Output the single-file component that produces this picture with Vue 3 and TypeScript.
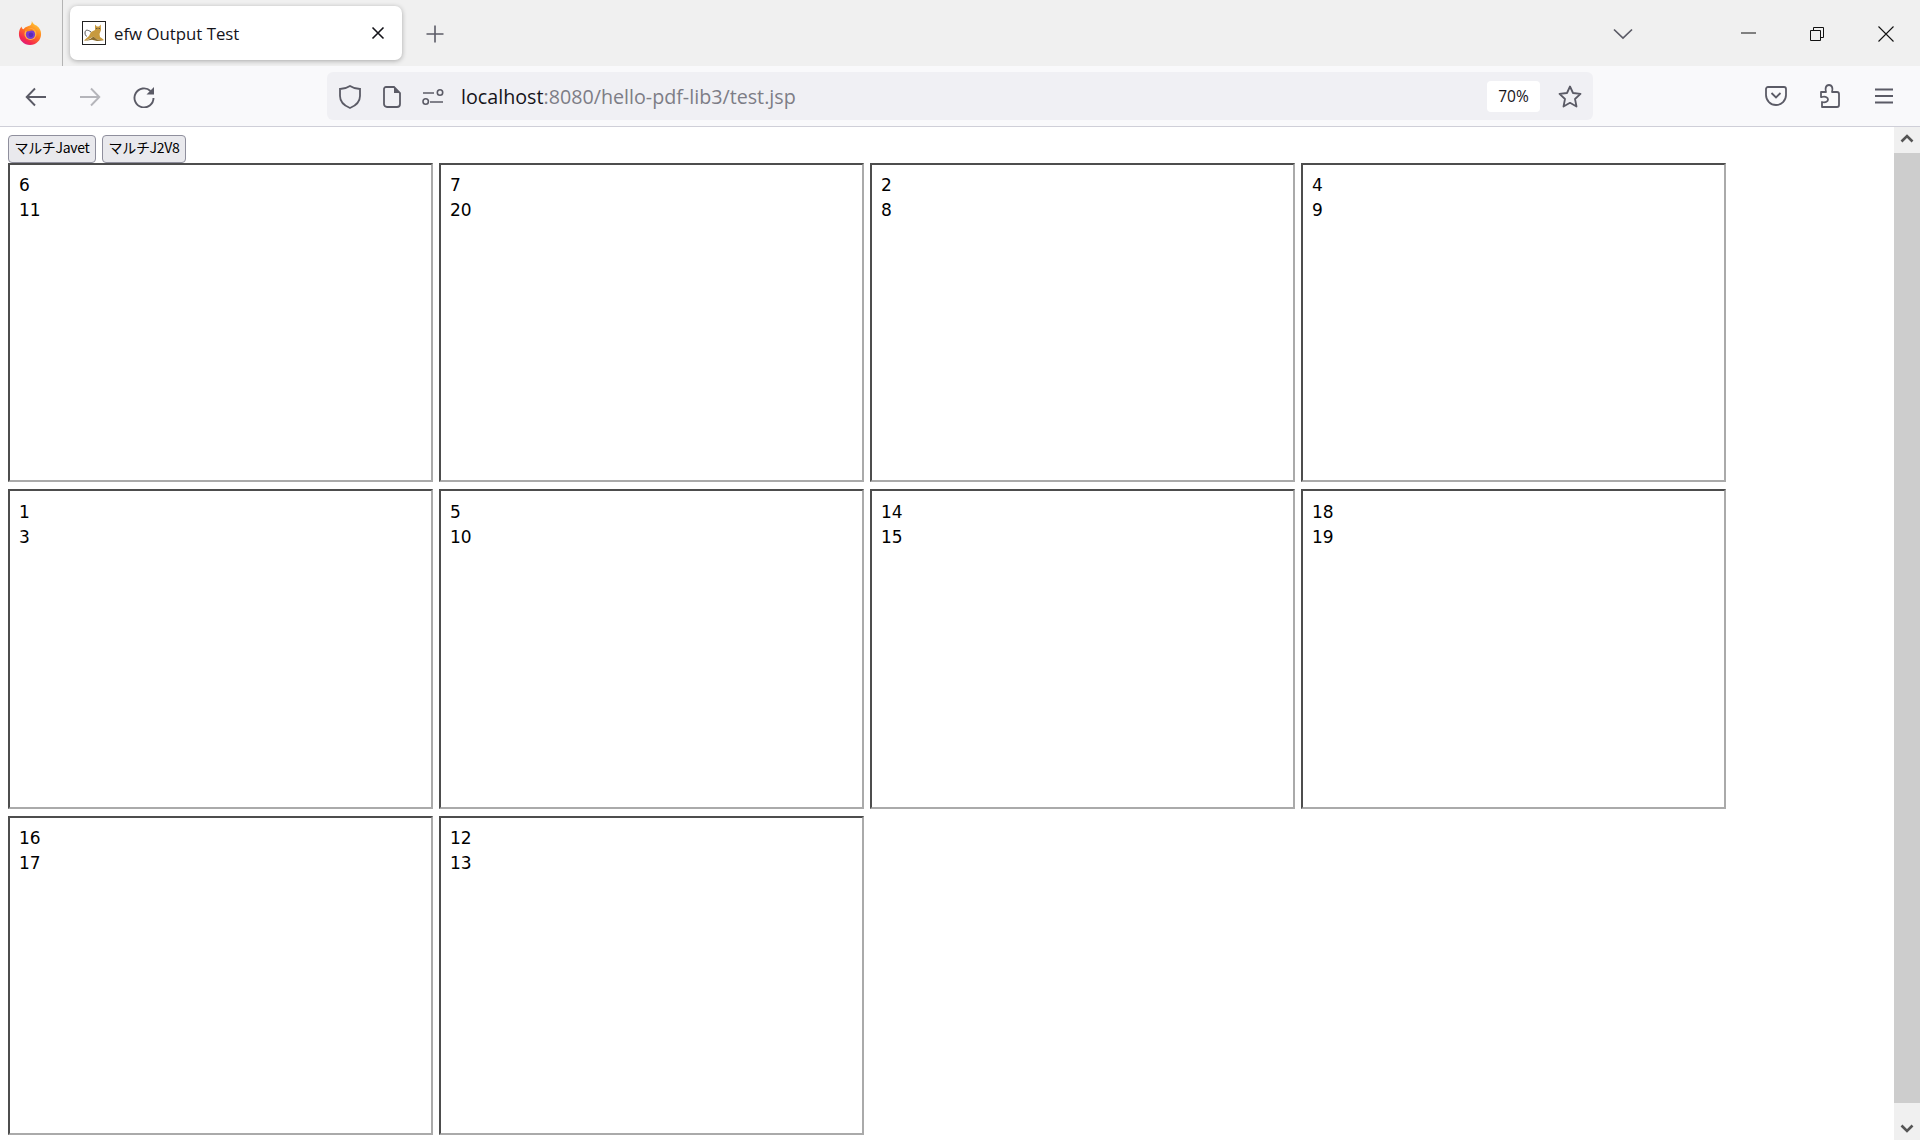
<script setup lang="ts">
const boxes: [number, number][] = [
  [6, 11], [7, 20], [2, 8], [4, 9],
  [1, 3], [5, 10], [14, 15], [18, 19],
  [16, 17], [12, 13],
]
</script>

<template>
  <div class="window">
    <header class="tabbar">
      <div class="logo-cell">
        <svg width="24" height="24" viewBox="0 0 26 26">
          <defs>
            <linearGradient id="ffg" x1="0.8" y1="0" x2="0.2" y2="1">
              <stop offset="0" stop-color="#ffd53a" />
              <stop offset="0.45" stop-color="#ff7a1f" />
              <stop offset="0.8" stop-color="#f5284e" />
              <stop offset="1" stop-color="#d61b8c" />
            </linearGradient>
          </defs>
          <path d="M15 0 C16 3 18 4 20 5 C24 8 25 11 25 14 A12 12 0 1 1 1 14 C1 11 2 8 4 6 C4 8 5 9 6 9 C8 6 11 6 13 5 C14 4 15 3 15 0Z" fill="url(#ffg)" />
          <circle cx="13.500" cy="14" r="6.500" fill="#ffb347" />
          <circle cx="13.500" cy="14.500" r="5" fill="#7b3bd0" />
          <path d="M7 10 C10 7 17 8 19 12 C17 10 14 10 12 11 C10 11 8 12 7 10Z" fill="#ff8a1f" />
          <circle cx="14" cy="15" r="2.500" fill="#5a2bb8" />
        </svg>
      </div>
      <div class="tab">
        <svg class="favicon" width="24" height="24" viewBox="0 0 24 24">
          <rect x="0.500" y="0.500" width="23" height="23" fill="#fff" stroke="#222" />
          <path d="M13 3.500 L14.800 5.500 L17 5.500 L18.800 3.500 L19 9 L17.500 13 L18 16 L21.500 18.500 L21.500 19.500 L15 18.500 L11.500 15.500 L7 18 L2.500 20 L2.500 19 L7 15 L9 11 L13 9 Z" fill="#c79a3f" />
          <path d="M9 11 C5 8 3 9 3 12 C3 14 4 15 5 15.500" fill="none" stroke="#555" stroke-width="1" />
          <path d="M2.500 20 L8 18 L11.500 15.500 L15 18.500 L21.500 19.500 L15 20 L10 18.800 Z" fill="#8a6a2a" />
          <circle cx="14.800" cy="7.500" r="0.600" fill="#333" />
          <circle cx="17.200" cy="7.500" r="0.600" fill="#333" />
        </svg>
        <span class="tab-title">efw Output Test</span>
        <svg class="tab-close" width="14" height="14" viewBox="0 0 14 14">
          <path d="M1.500 1.500 L12.500 12.500 M12.500 1.500 L1.500 12.500" stroke="#15141a" stroke-width="1.600" fill="none" />
        </svg>
      </div>
      <svg class="plus" width="18" height="18" viewBox="0 0 18 18">
        <path d="M9 0.500 V17.500 M0.500 9 H17.500" stroke="#5b5b66" stroke-width="1.600" fill="none" />
      </svg>
      <div class="grow"></div>
      <svg class="chevron" width="20" height="12" viewBox="0 0 20 12">
        <path d="M1 1.500 L10 10 L19 1.500" stroke="#5b5b66" stroke-width="1.700" fill="none" />
      </svg>
      <svg class="win-min" width="15" height="2" viewBox="0 0 15 2">
        <path d="M0 1 H15" stroke="#111" stroke-width="1" />
      </svg>
      <svg class="win-restore" width="14" height="14" viewBox="0 0 14 14">
        <path d="M0.500 3.500 H10.500 V13.500 H0.500 Z M3.500 3.500 V0.500 H13.500 V10.500 H10.500" stroke="#111" stroke-width="1" fill="none" />
      </svg>
      <svg class="win-close" width="16" height="16" viewBox="0 0 16 16">
        <path d="M0.500 0.500 L15.500 15.500 M15.500 0.500 L0.500 15.500" stroke="#111" stroke-width="1.100" fill="none" />
      </svg>
    </header>

    <nav class="navbar">
      <svg class="nav-back" width="22" height="20" viewBox="0 0 22 20">
        <path d="M21 10 H2 M10 1.500 L1.700 10 L10 18.500" stroke="#5b5b66" stroke-width="1.900" fill="none" />
      </svg>
      <svg class="nav-forward" width="22" height="20" viewBox="0 0 22 20">
        <path d="M1 10 H20 M12 1.500 L20.300 10 L12 18.500" stroke="#b5b5ba" stroke-width="1.900" fill="none" />
      </svg>
      <svg class="nav-reload" width="22" height="22" viewBox="0 0 22 22">
        <path d="M17.500 5 A9.500 9.500 0 1 0 20.500 12" stroke="#5b5b66" stroke-width="1.900" fill="none" />
        <path d="M21 1 V8.500 H13.500 Z" fill="#5b5b66" />
      </svg>
      <div class="urlbar">
        <svg class="url-shield" width="22" height="24" viewBox="0 0 22 24">
          <path d="M11 1 C14 3 17 4 21 4 V11 C21 17 16 21 11 23 C6 21 1 17 1 11 V4 C5 4 8 3 11 1Z" stroke="#5b5b66" stroke-width="1.800" fill="none" />
        </svg>
        <svg class="url-doc" width="18" height="22" viewBox="0 0 18 22">
          <path d="M3 1 H11 L17 7 V18 A3 3 0 0 1 14 21 H4 A3 3 0 0 1 1 18 V3 A2 2 0 0 1 3 1Z" stroke="#5b5b66" stroke-width="1.800" fill="none" />
          <path d="M11 1 L17 7 H11Z" fill="#5b5b66" />
        </svg>
        <svg class="url-perm" width="22" height="16" viewBox="0 0 22 16">
          <path d="M1 4 H12 M8 13 H21" stroke="#5b5b66" stroke-width="1.700" fill="none" />
          <circle cx="18" cy="3.500" r="2.700" stroke="#5b5b66" stroke-width="1.600" fill="none" />
          <circle cx="3.700" cy="12.500" r="2.700" stroke="#5b5b66" stroke-width="1.600" fill="none" />
        </svg>
        <div class="url-text"><span class="host">localhost</span><span class="rest">:8080/hello-pdf-lib3/test.jsp</span></div>
        <div class="zoom-badge">70%</div>
        <svg class="url-star" width="24" height="23" viewBox="0 0 24 23">
          <path d="M12 1.500 L15 8 L22.500 8.900 L17 14 L18.500 21.500 L12 17.800 L5.500 21.500 L7 14 L1.500 8.900 L9 8 Z" stroke="#5b5b66" stroke-width="1.800" stroke-linejoin="round" fill="none" />
        </svg>
      </div>
      <div class="grow"></div>
      <svg class="tool-pocket" width="22" height="20" viewBox="0 0 22 20">
        <path d="M3 1 H19 A2 2 0 0 1 21 3 V9 A10 10 0 0 1 1 9 V3 A2 2 0 0 1 3 1Z" stroke="#5b5b66" stroke-width="1.800" fill="none" />
        <path d="M6.500 7 L11 11.500 L15.500 7" stroke="#5b5b66" stroke-width="1.800" fill="none" />
      </svg>
      <svg class="tool-ext" width="20" height="24" viewBox="0 0 20 24">
        <path d="M1 8 H6 C5 5 5.500 1 9 1 C12.500 1 13 5 12 8 H17 A2 2 0 0 1 19 10 V21 A2 2 0 0 1 17 23 H2 V18 C6 19 8 17 8 15.500 C8 14 6 12 2 13 H1 Z" stroke="#5b5b66" stroke-width="1.800" stroke-linejoin="round" fill="none" />
      </svg>
      <svg class="tool-menu" width="18" height="16" viewBox="0 0 18 16">
        <path d="M0 1.500 H18 M0 8 H18 M0 14.500 H18" stroke="#5b5b66" stroke-width="1.800" fill="none" />
      </svg>
    </nav>

    <div class="content">
      <main class="page">
        <div class="buttons">
          <button class="btn btn-javet" type="button">マルチJavet</button>
          <button class="btn btn-j2v8" type="button">マルチJ2V8</button>
        </div>
        <div class="grid">
          <div v-for="(b, i) in boxes" :key="i" class="box">
            <div>{{ b[0] }}</div>
            <div>{{ b[1] }}</div>
          </div>
        </div>
      </main>
      <aside class="scrollbar">
        <div class="sb-btn">
          <svg width="14" height="9" viewBox="0 0 14 9"><path d="M1.500 7.500 L7 2 L12.500 7.500" stroke="#555" stroke-width="2.600" fill="none" /></svg>
        </div>
        <div class="sb-thumb"></div>
        <div class="sb-btn sb-btn-end">
          <svg width="14" height="9" viewBox="0 0 14 9"><path d="M1.500 1.500 L7 7 L12.500 1.500" stroke="#555" stroke-width="2.600" fill="none" /></svg>
        </div>
      </aside>
    </div>
  </div>
</template>

<style>
html, body { margin: 0; padding: 0; overflow: hidden; background: #fff; }
</style>

<style scoped>
.window {
  width: 1920px;
  height: 1140px;
  display: flex;
  flex-direction: column;
  overflow: hidden;
  font-family: "Open Sans", "Noto Sans", sans-serif;
  color: #15141a;
}
svg { display: block; flex: none; }
.grow { flex: 1; }

.tabbar {
  height: 66px;
  flex: none;
  background: #f0f0f0;
  display: flex;
  align-items: center;
}
.logo-cell {
  width: 63px;
  height: 66px;
  box-sizing: border-box;
  border-right: 1px solid #b4b4b4;
  display: flex;
  align-items: center;
  padding-left: 18px;
}
.tab {
  margin-left: 7px;
  width: 332px;
  height: 54px;
  box-sizing: border-box;
  background: #fff;
  border-radius: 7px;
  box-shadow: 0 1px 5px rgba(0, 0, 0, 0.3);
  display: flex;
  align-items: center;
  padding: 0 17px 0 12px;
}
.tab-title {
  margin-left: 8px;
  font-size: 16.800px;
  flex: 1;
  white-space: nowrap;
}
.plus { margin-left: 24px; margin-top: 2px; }
.chevron { margin-right: 108px; margin-top: 1px; }
.win-min { margin-right: 54px; }
.win-restore { margin-right: 54px; margin-top: 1px; }
.win-close { margin-right: 26px; margin-top: 1px; }

.navbar {
  height: 61px;
  flex: none;
  box-sizing: border-box;
  background: #f9f9fb;
  border-bottom: 1px solid #cfcfd8;
  display: flex;
  align-items: center;
}
.nav-back { margin-left: 25px; margin-top: 2px; }
.nav-forward { margin-left: 32px; margin-top: 2px; }
.nav-reload { margin-left: 32px; margin-top: 2px; }
.urlbar {
  margin-left: 172px;
  width: 1266px;
  height: 48px;
  box-sizing: border-box;
  background: #f0f0f4;
  border-radius: 6px;
  display: flex;
  align-items: center;
}
.url-shield { margin-left: 12px; margin-top: 2px; }
.url-doc { margin-left: 22px; margin-top: 2px; }
.url-perm { margin-left: 21px; margin-top: 2px; }
.url-text {
  margin-left: 17px;
  padding-top: 1px;
  flex: 1;
  font-size: 19.700px;
  white-space: nowrap;
}
.host { color: #15141a; }
.rest { color: #7d7d86; }
.zoom-badge {
  width: 53px;
  height: 31px;
  background: #fff;
  border-radius: 4px;
  font-size: 15.500px;
  display: flex;
  align-items: center;
  justify-content: center;
}
.url-star { margin-left: 18px; margin-right: 11px; }
.tool-pocket { margin-right: 33px; }
.tool-ext { margin-right: 35px; }
.tool-menu { margin-right: 27px; }

.content {
  flex: 1;
  min-height: 0;
  display: flex;
  background: #fff;
}
.page {
  flex: 1;
  min-width: 0;
  box-sizing: border-box;
  padding: 8px 0 0 8px;
  overflow: hidden;
}
.buttons {
  display: flex;
  gap: 6px;
  height: 28px;
}
.btn {
  height: 28px;
  box-sizing: border-box;
  padding: 0 0 4px;
  background: #e9e9ed;
  border: 1px solid #8f8f9d;
  border-radius: 4px;
  color: #000;
  font-family: "Noto Sans CJK JP", "Liberation Sans", sans-serif;
  font-size: 14px;
  letter-spacing: -0.3px;
}
.btn-javet { width: 88px; }
.btn-j2v8 { width: 84px; }
.grid {
  display: grid;
  grid-template-columns: repeat(4, 425px);
  grid-auto-rows: 319.400px;
  column-gap: 6px;
  row-gap: 7px;
}
.box {
  box-sizing: border-box;
  border: 2px solid;
  border-color: #4d4d4d #aaaaaa #aaaaaa #4d4d4d;
  padding: 8.300px 9px;
  font-family: "DejaVu Sans", sans-serif;
  font-size: 17px;
  line-height: 25px;
  color: #000;
}

.scrollbar {
  width: 26px;
  flex: none;
  background: #f0f0f0;
  display: flex;
  flex-direction: column;
}
.sb-btn {
  height: 26px;
  flex: none;
  display: flex;
  align-items: center;
  justify-content: center;
  padding-bottom: 3px;
  box-sizing: border-box;
}
.sb-btn-end { height: 37px; padding: 14px 0 0; }
.sb-thumb {
  flex: 1;
  background: #cdcdcd;
}
</style>
